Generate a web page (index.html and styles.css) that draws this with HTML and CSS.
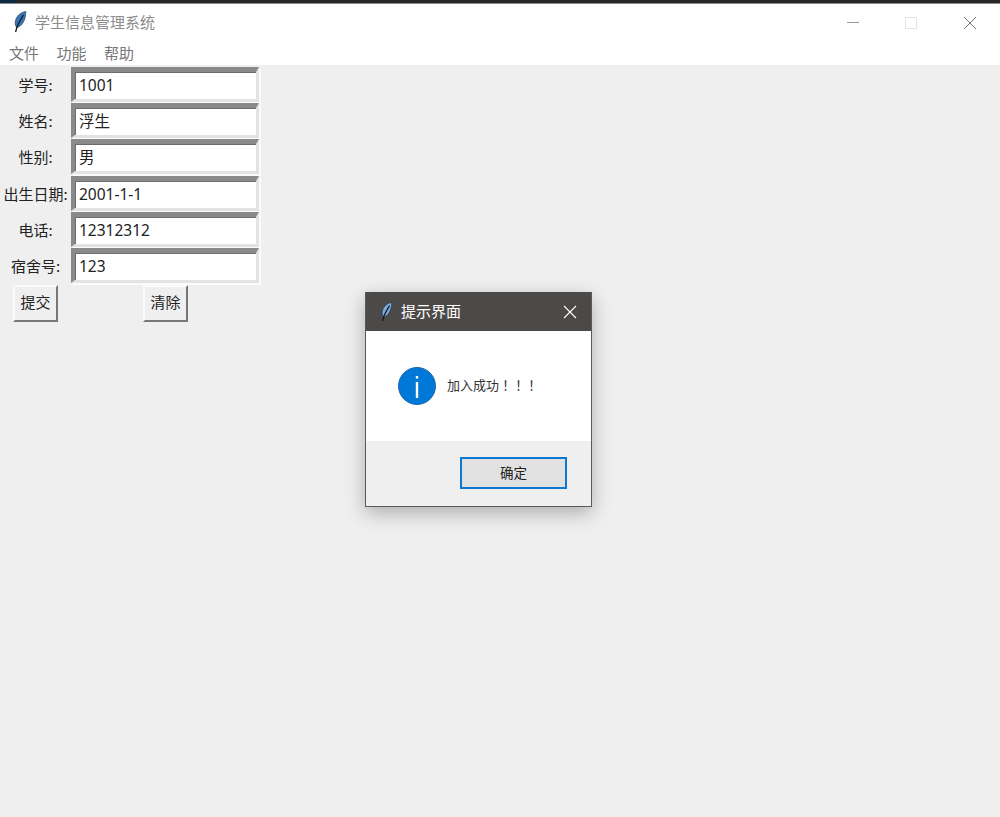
FILE: index.html
```html
<!DOCTYPE html>
<html lang="zh">
<head>
<meta charset="utf-8">
<title>学生信息管理系统</title>
<link rel="stylesheet" href="styles.css">
</head>
<body>
<div class="topstrip"><span class="stripnavy"></span></div>
<header class="titlebar">
  <svg class="feather" width="14" height="22" viewBox="0 0 14 22"><path d="M12.8 0.5C7.5 1.2 2.6 5.6 2.2 11.5C2 13.6 2.6 15.8 4 16.4C9 15.6 12.8 9 12.8 0.5Z" fill="#3a76b8" stroke="#26405f" stroke-width=".7"/><path d="M10.4 4C8 8 5.6 12 4 16L2.6 21" stroke="#10151c" stroke-width="1.3" fill="none"/></svg>
  <span class="apptitle">学生信息管理系统</span>
  <div class="winctl">
    <svg width="14" height="14" viewBox="0 0 14 14"><path d="M1 6.5H13" stroke="#999" fill="none"/></svg>
    <svg width="14" height="14" viewBox="0 0 14 14"><rect x="1.5" y="1.5" width="11" height="11" stroke="#e4e4e4" fill="none"/></svg>
    <svg class="ctlclose" width="14" height="14" viewBox="0 0 14 14"><path d="M1 1L13 13M13 1L1 13" stroke="#777" fill="none"/></svg>
  </div>
</header>
<nav class="menubar"><span>文件</span><span>功能</span><span>帮助</span></nav>
<main class="content">
  <div class="form">
    <div class="row"><label>学号:</label><div class="entry">1001</div></div>
    <div class="row"><label>姓名:</label><div class="entry">浮生</div></div>
    <div class="row"><label>性别:</label><div class="entry">男</div></div>
    <div class="row"><label>出生日期:</label><div class="entry">2001-1-1</div></div>
    <div class="row"><label>电话:</label><div class="entry">12312312</div></div>
    <div class="row"><label>宿舍号:</label><div class="entry">123</div></div>
    <div class="actions"><button class="tkbtn">提交</button><button class="tkbtn">清除</button></div>
  </div>
  <section class="dialog">
    <div class="dlgtitle">
      <svg class="feather" width="13" height="20" viewBox="0 0 14 22"><path d="M12.8 0.5C7.5 1.2 2.6 5.6 2.2 11.5C2 13.6 2.6 15.8 4 16.4C9 15.6 12.8 9 12.8 0.5Z" fill="#7fa8dc" stroke="#1e2f46" stroke-width=".7"/><path d="M10.4 4C8 8 5.6 12 4 16L2.6 21" stroke="#10151c" stroke-width="1.3" fill="none"/></svg>
      <span class="dlgname">提示界面</span>
      <svg class="dlgclose" width="14" height="14" viewBox="0 0 14 14"><path d="M1 1L13 13M13 1L1 13" stroke="#fff" stroke-width="1.1" fill="none"/></svg>
    </div>
    <div class="dlgbody">
      <svg width="38" height="38" viewBox="0 0 38 38"><circle cx="19" cy="19" r="18.5" fill="#0078d7" stroke="#1f65ad"/><rect x="17.8" y="15" width="2.4" height="16" fill="#fff"/><rect x="17.8" y="9" width="2.4" height="2.6" fill="#fff"/></svg>
      <span class="msg">加入成功<span class="bang" lang="zh-Hant">！！！</span></span>
    </div>
    <div class="dlgfoot"><button class="okbtn">确定</button></div>
  </section>
</main>
</body>
</html>
```
FILE: styles.css
```css
html, body { margin: 0; padding: 0; height: 100%; }
body {
  width: 1000px; height: 817px; overflow: hidden;
  display: flex; flex-direction: column;
  font-family: "Liberation Sans", "Noto Sans CJK SC", sans-serif;
  background: #efefef;
}
.topstrip { height: 3px; background: #262626; border-bottom: 1px solid #8a8a8a; flex: none; display: flex; }
.stripnavy { width: 16px; background: #0c2c44; }
.titlebar { height: 36px; background: #fff; display: flex; align-items: center; padding-left: 13px; flex: none; }
.apptitle { margin-left: 8px; margin-top: -2px; font-size: 15px; color: #8c8c8c; font-family: "Noto Sans CJK SC", sans-serif; }
.winctl { margin-left: auto; margin-top: 2px; display: flex; gap: 44px; padding-right: 23px; }
.ctlclose { margin-left: 1px; }
.menubar { height: 25px; background: #fff; display: flex; gap: 17.5px; padding-left: 9px; align-items: center; font-size: 15px; color: #777; font-family: "Noto Sans CJK SC", sans-serif; flex: none; }
.content { flex: 1; position: relative; padding-top: 2px; }
.form { width: 262px; }
.row { height: 36.2px; display: flex; align-items: flex-start; }
.row label { width: 71px; line-height: 36px; text-align: center; font-size: 15px; color: #222; font-family: "Noto Sans CJK SC", sans-serif; white-space: nowrap; }
.entry {
  width: 188px; height: 35px; box-sizing: border-box;
  background: #fff; font-size: 15.5px; color: #222; line-height: 26px;
  border-style: solid; border-width: 5px 3px 3px 4px;
  border-color: #8a8a8a #e3e3e3 #e3e3e3 #8a8a8a;
  padding-left: 4px;
  font-family: "Noto Sans", "Noto Sans CJK SC", sans-serif;
  box-shadow: 2px 2px 0 #fbfbfb, inset 1px 1px 0 #6c6c6c;
}
.actions { display: flex; gap: 85px; padding-left: 13px; margin-top: .8px; }
.tkbtn {
  width: 45px; height: 37px; padding: 0 0 4px; box-sizing: border-box;
  background: #efefef; color: #222; font-size: 15px;
  font-family: "Noto Sans CJK SC", sans-serif;
  border-style: solid; border-width: 2px;
  border-color: #fafafa #777 #777 #fafafa;
}
.dialog {
  position: absolute; left: 365px; top: 227px; width: 227px; height: 215px;
  box-sizing: border-box; border: 1px solid #5a5a5a; border-top: 0;
  background: #fff; display: flex; flex-direction: column;
  box-shadow: 0 6px 18px rgba(0,0,0,.28);
}
.dlgtitle { height: 39px; background: #4c4a48; display: flex; align-items: center; padding: 0 14px 0 14px; flex: none; }
.dlgname { margin-left: 8px; margin-top: -3px; font-size: 15px; color: #fff; font-family: "Noto Sans CJK SC", sans-serif; }
.dlgclose { margin-left: auto; }
.dlgbody { height: 110px; display: flex; align-items: center; padding-left: 32px; flex: none; }
.msg { margin-left: 11px; margin-top: -3px; font-size: 13px; color: #333; font-family: "Noto Sans CJK SC", sans-serif; }
.bang { font-family: "Noto Sans CJK TC", sans-serif; }
.dlgfoot { flex: 1; background: #efefef; display: flex; justify-content: flex-end; align-items: flex-start; padding: 16px 24px 0 0; }
.okbtn {
  width: 107px; height: 32px; box-sizing: border-box; padding: 0 0 2px;
  background: #e1e1e1; border: 2px solid #0c78d0; color: #222;
  font-size: 13.5px; font-family: "Noto Sans CJK SC", sans-serif;
}
```
